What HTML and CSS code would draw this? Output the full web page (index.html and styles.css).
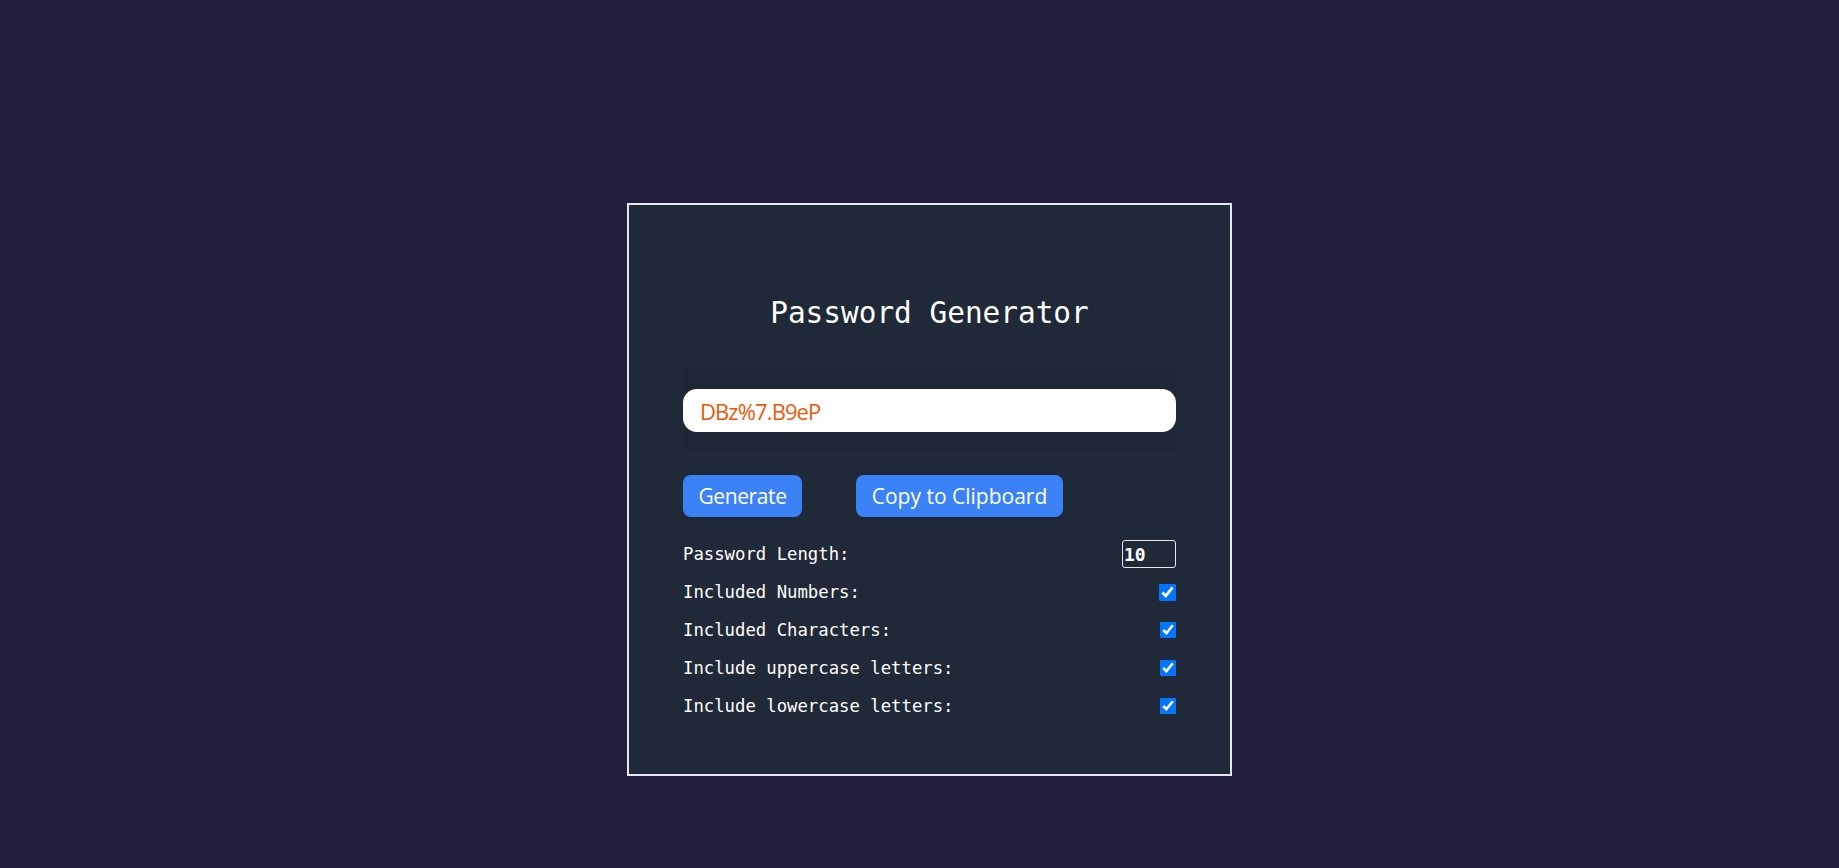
FILE: index.html
```html
<!DOCTYPE html>
<html lang="en">
<head>
<meta charset="utf-8">
<title>Password Generator</title>
<link rel="stylesheet" href="styles.css">
</head>
<body>
<main class="page">
  <section class="card">
    <h1 class="title">Password Generator</h1>
    <div class="result">
      <input class="result-input" type="text" value="DBz%7.B9eP" readonly>
    </div>
    <div class="actions">
      <button class="btn btn-generate" type="button">Generate</button>
      <button class="btn btn-copy" type="button">Copy to Clipboard</button>
    </div>
    <div class="settings">
      <div class="setting">
        <label for="len">Password Length:</label>
        <input id="len" class="length" type="number" value="10">
      </div>
      <div class="setting">
        <label for="num">Included Numbers:</label>
        <input id="num" class="check check-first" type="checkbox" checked>
      </div>
      <div class="setting">
        <label for="chr">Included Characters:</label>
        <input id="chr" class="check" type="checkbox" checked>
      </div>
      <div class="setting">
        <label for="up">Include uppercase letters:</label>
        <input id="up" class="check" type="checkbox" checked>
      </div>
      <div class="setting">
        <label for="low">Include lowercase letters:</label>
        <input id="low" class="check" type="checkbox" checked>
      </div>
    </div>
  </section>
</main>
</body>
</html>
```
FILE: styles.css
```css
html, body {
  margin: 0;
  padding: 0;
}

body {
  background: #221f3e;
  min-height: 100vh;
}

.page {
  display: flex;
  justify-content: center;
  align-items: flex-start;
  padding: 203px 0 0 20px;
}

.card {
  width: 493px;
  padding: 91px 54px 49px;
  border: 2px solid #e5e7eb;
  background: #1f2937;
}

.title {
  margin: 0;
  font-family: "DejaVu Sans Mono", monospace;
  font-size: 29.4px;
  line-height: 34px;
  font-weight: normal;
  color: #ffffff;
  text-align: center;
}

.result {
  margin-top: 38px;
  padding: 21px 0 20px;
  background: #1e2735;
}

.result-input {
  display: block;
  width: 100%;
  box-sizing: border-box;
  height: 43px;
  border: 0;
  border-radius: 14px;
  padding: 0 17px;
  font-family: "Open Sans", sans-serif;
  font-size: 22px;
  letter-spacing: -0.9px;
  color: #ea580c;
  background: #ffffff;
  outline: none;
}

.actions {
  display: flex;
  gap: 54px;
  margin-top: 23px;
}

.btn {
  height: 42px;
  padding: 0 17px;
  border: 0;
  border-radius: 8px;
  background: #3b82f6;
  color: #ffffff;
  font-family: "Open Sans", sans-serif;
  font-size: 21px;
  cursor: pointer;
}

.btn-generate {
  width: 119px;
  padding: 0;
  letter-spacing: -0.4px;
}

.btn-copy {
  width: 207px;
  padding: 0;
}

.settings {
  margin-top: 18px;
}

.setting {
  display: flex;
  justify-content: space-between;
  align-items: center;
  height: 38px;
  font-family: "DejaVu Sans Mono", monospace;
  font-size: 17.3px;
  color: #ffffff;
}

.length {
  width: 54px;
  height: 28px;
  box-sizing: border-box;
  margin: 0;
  border: 1px solid #e5e7eb;
  border-radius: 3px;
  background: transparent;
  color: #ffffff;
  font-family: "DejaVu Sans Mono", monospace;
  font-size: 18px;
  font-weight: bold;
  padding: 0 0 0 1px;
  -moz-appearance: textfield;
  appearance: textfield;
}

.length::-webkit-inner-spin-button,
.length::-webkit-outer-spin-button {
  -webkit-appearance: none;
  margin: 0;
}

.check {
  width: 16px;
  height: 16px;
  margin: 0;
  accent-color: #0075ff;
}

.check-first {
  width: 17px;
  height: 17px;
}
```
